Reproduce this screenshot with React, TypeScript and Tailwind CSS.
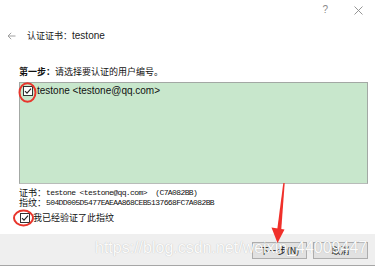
import React from "react";

const Check = ({ className = "" }: { className?: string }) => (
  <svg width="10" height="10" viewBox="0 0 10 10" className={className}>
    <rect x="0.5" y="0.5" width="9" height="9" fill="#ffffff" stroke="#333333" strokeWidth="1" />
    <path d="M2 5.2 L4 7.2 L8 2.6" fill="none" stroke="#222222" strokeWidth="1.1" />
  </svg>
);

export default function App() {
  const cjk = "font-['Noto_Sans_CJK_SC','Liberation_Sans',sans-serif]";
  return (
    <div className="relative w-[375px] h-[267px] overflow-hidden bg-white text-[#111] font-['Liberation_Sans','Noto_Sans_CJK_SC',sans-serif] flex flex-col">
      {/* title bar */}
      <div className="h-[20px] flex items-center justify-end pr-[12px] gap-[26px] text-[#8a8a8a]">
        <span className="text-[10px] leading-[20px]">?</span>
        <svg width="9" height="9" viewBox="0 0 9 9">
          <path d="M0.5 0.5 L8.5 8.5 M8.5 0.5 L0.5 8.5" stroke="#8a8a8a" strokeWidth="0.9" />
        </svg>
      </div>
      {/* header row */}
      <div className="mt-[8px] h-[16px] flex items-center pl-[7px]">
        <svg width="9" height="8" viewBox="0 0 9 8">
          <path d="M8.5 4 L1 4 M4.2 0.8 L1 4 L4.2 7.2" fill="none" stroke="#a0a0a0" strokeWidth="1" />
        </svg>
        <span className={`ml-[11px] text-[9px] leading-[16px] text-[#222] ${cjk}`}>认证证书：</span>
        <span className="text-[10px] leading-[16px] text-[#222]">testone</span>
      </div>
      {/* step label */}
      <div className={`mt-[22px] h-[12px] pl-[19px] text-[9px] leading-[12px] ${cjk}`}>
        <span className="font-bold">第一步：</span>
        <span>请选择要认证的用户编号。</span>
      </div>
      {/* list box */}
      <div className="mt-[4px] ml-[19px] w-[349px] h-[102px] bg-[#c8e7cc] border border-[#a3a8a4] border-b-[#b8bcb9] pt-[3px] pl-[3px]">
        <div className="flex items-center h-[10px]">
          <Check />
          <span className="ml-[4px] text-[10px] leading-[10px]">testone &lt;testone@qq.com&gt;</span>
        </div>
      </div>
      {/* cert info */}
      <div className="mt-[4px] pl-[19px] flex flex-col">
        <div className="h-[10px] flex items-center whitespace-pre">
          <span className={`text-[9px] leading-[10px] ${cjk}`}>证书：</span>
          <span className="font-['Liberation_Mono',monospace] text-[8px] leading-[10px] tracking-[-0.6px]">testone &lt;testone@qq.com&gt;  (C7A082BB)</span>
        </div>
        <div className="h-[10px] flex items-center whitespace-pre">
          <span className={`text-[9px] leading-[10px] ${cjk}`}>指纹：</span>
          <span className="font-['Liberation_Mono',monospace] text-[8px] leading-[10px] tracking-[-0.6px]">504DD005D5477EAEAA868CEB5137668FC7A082BB</span>
        </div>
      </div>
      {/* verify row */}
      <div className="mt-[3px] h-[14px] pl-[20px] flex items-center">
        <Check />
        <span className={`ml-[3px] text-[9px] leading-[14px] ${cjk}`}>我已经验证了此指纹</span>
      </div>
      {/* footer */}
      <div className="mt-auto h-[32px] bg-[#efefef] border-b border-[#a6a6a6] flex justify-end items-start pt-[8px] pr-[7px] gap-[6px] mb-[1px]">
        <button className={`w-[55px] h-[17px] bg-[#e1e1e1] border border-[#adadad] text-[9px] leading-[15px] text-[#111] ${cjk}`}>
          下一步(<span className="underline">N</span>)
        </button>
        <button className={`w-[55px] h-[17px] bg-[#e1e1e1] border border-[#adadad] text-[9px] leading-[15px] text-[#111] ${cjk}`}>
          取消
        </button>
      </div>

      {/* watermark */}
      <div className="absolute left-[95px] top-[240px] text-[16px] leading-[16px] text-[#fbfbfb] [text-shadow:0_0_1px_rgba(0,0,0,0.25)] whitespace-nowrap pointer-events-none">
        https://blog.csdn.net/weixin_44009447
      </div>

      {/* annotations */}
      <svg className="absolute left-0 top-0 pointer-events-none" width="375" height="267" viewBox="0 0 375 267">
        <ellipse cx="27.5" cy="92.5" rx="8" ry="9.3" fill="none" stroke="#e8352c" strokeWidth="2" />
        <ellipse cx="23.5" cy="218" rx="9.5" ry="7.5" fill="none" stroke="#e8352c" strokeWidth="2" />
        <polygon points="283.3,183 284.7,183 281.3,229 277.3,229" fill="#f0302a" />
        <polygon points="271.5,227.5 284.5,229.5 277.5,243" fill="#f0302a" />
      </svg>
    </div>
  );
}
